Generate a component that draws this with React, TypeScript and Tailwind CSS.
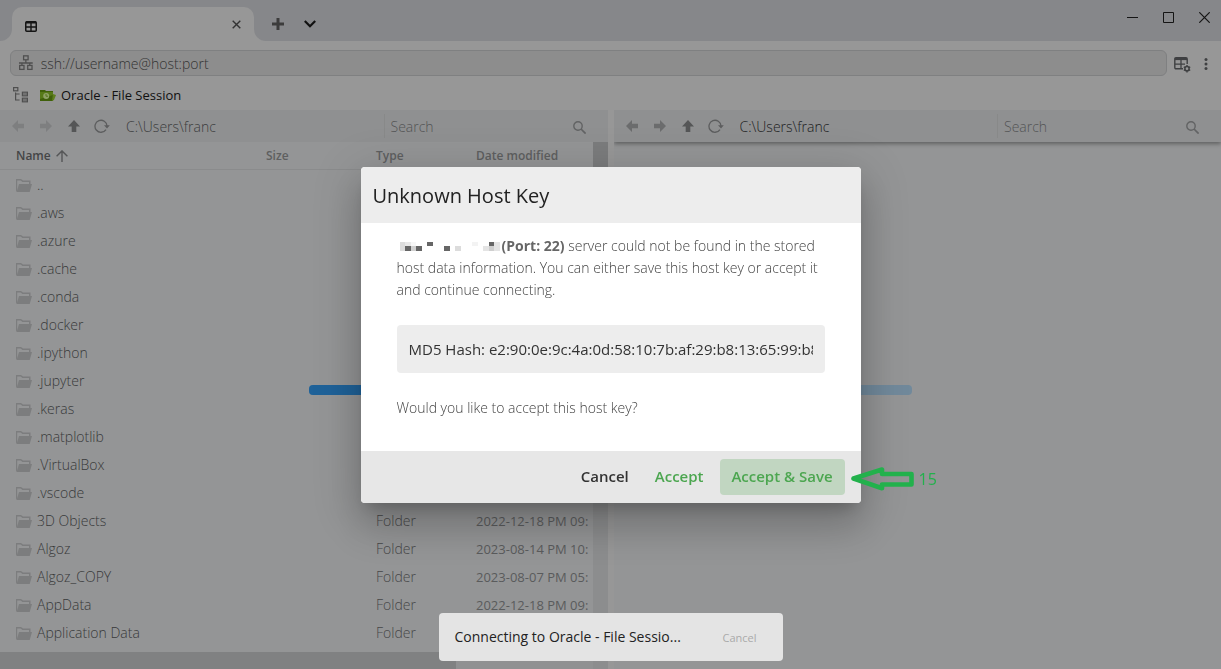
import React from "react";

const FOLDERS: [string, string, string][] = [
  ["..", "", ""],
  [".aws", "", ""],
  [".azure", "", ""],
  [".cache", "", ""],
  [".conda", "", ""],
  [".docker", "", ""],
  [".ipython", "", ""],
  [".jupyter", "", ""],
  [".keras", "", ""],
  [".matplotlib", "", ""],
  [".VirtualBox", "", ""],
  [".vscode", "", ""],
  ["3D Objects", "Folder", "2022-12-18 PM 09:"],
  ["Algoz", "Folder", "2023-08-14 PM 10:"],
  ["Algoz_COPY", "Folder", "2023-08-07 PM 05:"],
  ["AppData", "Folder", "2022-12-18 PM 09:"],
  ["Application Data", "Folder", ""],
];

function TabIcon() {
  return (
    <svg width="12" height="11" viewBox="0 0 12 11" fill="none" stroke="#151515">
      <rect x="0.75" y="0.75" width="10.5" height="9.5" rx="1" strokeWidth="1.5" />
      <path d="M1 1.4h10" strokeWidth="2.2" />
      <path d="M6 2v8M1 6h10" strokeWidth="1.4" />
    </svg>
  );
}

function NetworkIcon() {
  return (
    <svg width="16" height="16" viewBox="0 0 16 16" fill="none" stroke="#4f4f4f" strokeWidth="1.3">
      <rect x="5.7" y="0.7" width="4.6" height="4" />
      <path d="M8 5v3M1 8h14M4 8v2.5M12 8v2.5" />
      <rect x="1.7" y="10.5" width="4.4" height="4" />
      <rect x="9.9" y="10.5" width="4.4" height="4" />
    </svg>
  );
}

function TreeIcon() {
  return (
    <svg width="16" height="16" viewBox="0 0 16 16" fill="none" stroke="#4f4f4f" strokeWidth="1.2">
      <rect x="1.6" y="0.6" width="4.2" height="3.2" />
      <path d="M3.600 5.500v7.500h4M3.600 7h4" />
      <rect x="10.4" y="5.200" width="5" height="3.600" />
      <rect x="10.4" y="11.200" width="5" height="3.600" />
      <path d="M11 7h4M11 13h4" strokeWidth="1" />
    </svg>
  );
}

function SessionIcon() {
  return (
    <svg width="16" height="12" viewBox="0 0 16 12">
      <path d="M0 0h5l1 1h7v10H0z" fill="#40600b" />
      <path d="M0 2h13v3L0 9z" fill="#577a18" />
      <circle cx="6.2" cy="6" r="3" fill="#8fa266" />
      <path d="M6 4v2.2h2" stroke="#55751b" fill="none" />
      <path d="M13 4l3 1-2 5-2 1z" fill="#5f7f20" />
    </svg>
  );
}

function TableGearIcon() {
  return (
    <svg width="17" height="16" viewBox="0 0 17 16" fill="none" stroke="#3f4042">
      <path d="M9 11.7H2Q.8 11.7.8 10.5V2Q.8.8 2 .8H12Q13.2.8 13.2 2V7" strokeWidth="1.4" />
      <path d="M1 2h12" strokeWidth="2.2" />
      <path d="M7 2v10M1 7.2h10" strokeWidth="1.3" />
      <circle cx="13" cy="11.7" r="2.1" strokeWidth="1.5" />
      <path d="M13 8v1.6M13 13.8v1.6M9.8 9.9l1.4.8M14.8 12.7l1.4.8M9.8 13.5l1.4-.8M14.8 10.7l1.4-.8" strokeWidth="1.4" />
    </svg>
  );
}

function ArrowIcon({ kind }: { kind: "left" | "right" | "up" }) {
  const paths = {
    left: "M0 6L6 0V3.7H12V8.3H6V12z",
    right: "M12 6L6 0V3.7H0V8.3H6V12z",
    up: "M6 0L12 6.5H8.3V12H3.7V6.5H0z",
  };
  return (
    <svg width="12" height="12" viewBox="0 0 12 12" fill="currentColor">
      <path d={paths[kind]} />
    </svg>
  );
}

function RefreshIcon() {
  return (
    <svg width="16" height="14" viewBox="0 0 16 14" fill="none" stroke="currentColor" strokeWidth="1.3">
      <path d="M12 10.6A6 6 0 1 1 13 7" />
      <path d="M10 6.3h5.8L13 9.4z" fill="currentColor" stroke="none" />
    </svg>
  );
}

function SearchIcon() {
  return (
    <svg width="13" height="13" viewBox="0 0 13 13" fill="none" stroke="#626364" strokeWidth="1.4">
      <circle cx="5" cy="5" r="4.2" />
      <path d="M8 8l4.6 4.6" strokeWidth="1.7" />
    </svg>
  );
}

function FolderIcon() {
  return (
    <svg width="16" height="13" viewBox="0 0 16 13" className="shrink-0">
      <path d="M0 13V0h5l2 1.500h7.500V5H13V3H6.500L4.600 1.500 1.200 1.600V11z" fill="#7c7d7e" />
      <path d="M3 5h13l-2.300 8H.6z" fill="#7c7d7e" />
    </svg>
  );
}

function PanelToolbar({ id, active }: { id: string; active?: boolean }) {
  return (
    <div
      className={
        active
          ? "flex h-8 items-center bg-[#8f9091] pl-3 shadow-[0_2px_4px_rgba(0,0,0,0.35)]"
          : "flex h-8 items-center bg-[#8f9091] pl-3"
      }
    >
      <div className={active ? "flex items-center gap-4 text-[#6b6c6d]" : "flex items-center gap-4 text-[#7e7f80]"}>
        <button aria-label="Back"><ArrowIcon kind="left" /></button>
        <button aria-label="Forward"><ArrowIcon kind="right" /></button>
        <button aria-label="Up" className="text-[#555657]"><ArrowIcon kind="up" /></button>
        <button aria-label="Refresh" className="-ml-0.5 text-[#5c5d5e]"><RefreshIcon /></button>
      </div>
      <input
        aria-label="Path"
        defaultValue="C:\Users\franc"
        className={
          active
            ? "ml-4 w-0 flex-1 bg-transparent pt-0.5 text-sm font-light text-[#1c1d1e] outline-none"
            : "ml-4 w-0 flex-1 bg-transparent pt-0.5 text-sm font-light text-[#3c3d3e] outline-none"
        }
      />
      <div className="flex h-6 w-[224px] items-center border-l border-[#888989] pr-[22px] pl-1.5">
        <input
          id={id}
          aria-label="Search"
          placeholder="Search"
          className="w-0 flex-1 bg-transparent pt-0.5 text-sm font-light outline-none placeholder:text-[#535455]"
        />
        <button aria-label="Run search" className="pt-0.5"><SearchIcon /></button>
      </div>
    </div>
  );
}

function FilePanel() {
  return (
    <section className="flex min-w-0 flex-1 flex-col bg-[#949596]">
      <PanelToolbar id="search-local" />
      <div className="flex min-h-0 flex-1">
        <div className="flex min-w-0 flex-1 flex-col">
          <div className="min-h-0 flex-1 overflow-hidden">
            <table className="w-full table-fixed border-separate border-spacing-0 text-left whitespace-nowrap">
              <colgroup>
                <col className="w-[250px]" />
                <col className="w-[110px]" />
                <col className="w-[100px]" />
                <col />
              </colgroup>
              <thead className="text-xs text-[#5e5f60]">
                <tr className="h-7">
                  <th className="border-b border-[#8a8b8c] pl-4 font-semibold text-[#444546]">
                    <span className="flex items-center gap-[5px]">
                      Name
                      <svg width="12" height="12" viewBox="0 0 12 12" fill="none" stroke="#555657" strokeWidth="1.4">
                        <path d="M6 12V1M.6 6.2L6 .9l5.4 5.3" />
                      </svg>
                    </span>
                  </th>
                  <th className="border-b border-[#8a8b8c] pl-4 font-semibold">Size</th>
                  <th className="border-b border-[#8a8b8c] pl-4 font-semibold">Type</th>
                  <th className="border-b border-[#8a8b8c] pl-4 font-semibold">Date modified</th>
                </tr>
              </thead>
              <tbody className="text-sm font-light text-[#464748]">
                {FOLDERS.map(([name, type, date]) => (
                  <tr key={name} className="h-7">
                    <td className="pt-0.5 pl-4 text-[#38393a]">
                      <span className="flex items-center gap-[5px]">
                        <FolderIcon />
                        {name}
                      </span>
                    </td>
                    <td />
                    <td className="pt-0.5 pl-4">{type}</td>
                    <td className="pt-0.5 pl-4 text-[13px] font-normal text-[#5a5b5c]">{date}</td>
                  </tr>
                ))}
              </tbody>
            </table>
          </div>
          <div className="h-[17px] bg-[#909192]">
            <div className="h-full w-[77%] bg-[#808182]" />
          </div>
        </div>
        <div className="w-[15px] bg-[#8c8d8e]">
          <div className="h-1/2 bg-[#7b7c7d]" />
        </div>
      </div>
    </section>
  );
}

function RedactedHost() {
  const cells: [number, number, number, number, string][] = [
    [0, 0, 5, 9, "#dcdcdc"],
    [5, 0, 6, 4, "#e8e8e8"],
    [11, 0, 5, 4, "#f7f7f7"],
    [5, 4, 6, 5, "#666666"],
    [11, 4, 5, 5, "#cfcfcf"],
    [16, 4, 6, 5, "#666666"],
    [27, 0, 6, 4, "#666666"],
    [44, 4, 6, 5, "#666666"],
    [55, 4, 6, 5, "#dcdcdc"],
    [72, 0, 6, 4, "#f3f3f3"],
    [83, 4, 6, 5, "#e4e4e4"],
    [89, 0, 5, 4, "#666666"],
    [89, 4, 5, 5, "#cfcfcf"],
    [94, 0, 6, 9, "#e4e4e4"],
  ];
  return (
    <svg width="100" height="9" viewBox="0 0 100 9" shapeRendering="crispEdges" className="mr-0.5 ml-[3px] inline-block align-baseline">
      {cells.map(([x, y, w, h, c], i) => (
        <rect key={i} x={x} y={y} width={w} height={h} fill={c} />
      ))}
    </svg>
  );
}

function HostKeyDialog() {
  return (
    <div
      role="dialog"
      aria-labelledby="dialog-title"
      className="relative w-[500px] rounded bg-white shadow-[0_11px_15px_-7px_rgba(0,0,0,0.2),0_24px_38px_3px_rgba(0,0,0,0.14),0_9px_46px_8px_rgba(0,0,0,0.12)]"
    >
      <h1 id="dialog-title" className="flex h-14 items-center rounded-t bg-[#ededed] px-3 pt-0.5 text-xl font-medium text-[#222222]">
        Unknown Host Key
      </h1>
      <div className="px-9 pt-3 text-sm leading-[22px] font-light text-[#444444]">
        <p className="whitespace-nowrap">
          <RedactedHost />
          <b className="font-bold text-[#666666]">(Port: 22)</b> server could not be found in the stored
          <br />
          host data information. You can either save this host key or accept it
          <br />
          and continue connecting.
        </p>
        <input
          aria-label="Host key hash"
          readOnly
          value="MD5 Hash: e2:90:0e:9c:4a:0d:58:10:7b:af:29:b8:13:65:99:b8"
          className="mt-6 block h-12 w-full rounded bg-[#ededed] px-3 text-[15px] font-normal text-[#333333] outline-none"
        />
        <p className="pt-6 pb-8">Would you like to accept this host key?</p>
      </div>
      <div className="flex h-[52px] items-center justify-end gap-2 rounded-b bg-[#e7e7e7] px-4 text-[15px] font-semibold">
        <button className="h-9 px-3 text-[#333333]">Cancel</button>
        <button className="h-9 pr-2 pl-1.5 text-[#4ca650]">Accept</button>
        <button className="h-9 w-[125px] rounded bg-[#c1d6c1] text-[#4ca650]">Accept &amp; Save</button>
      </div>
      <div className="absolute bottom-3 left-[489px] flex items-center gap-1 text-base leading-6 text-[#22b14c]">
        <svg width="65" height="24" viewBox="0 0 65 24" fill="none" stroke="#22b14c" strokeWidth="4.6" strokeLinejoin="round">
          <path d="M3.500 11.500L32 2.500V7H61.500V17.500H32V21.200z" />
        </svg>
        15
      </div>
    </div>
  );
}

export default function App() {
  return (
    <div className="relative flex h-screen flex-col overflow-hidden bg-[#979797] font-['Open_Sans','Noto_Sans',sans-serif]">
      <header className="flex h-[41px] items-end justify-between bg-[#86878a]">
        <div className="flex items-end">
          <div className="h-3 w-3 bg-[#979797]"><div className="h-full rounded-br-xl bg-[#86878a]" /></div>
          <div className="flex h-[34px] w-[242px] items-center justify-between rounded-t-[10px] bg-[#979797] px-[13px] pt-1">
            <TabIcon />
            <button aria-label="Close tab" className="pb-1">
              <svg width="9" height="9" viewBox="0 0 9 9" stroke="#333333" strokeWidth="1.4"><path d="M.7.7l7.600 7.600M8.300.7L.7 8.300" /></svg>
            </button>
          </div>
          <div className="h-3 w-3 bg-[#979797]"><div className="h-full rounded-bl-xl bg-[#86878a]" /></div>
          <div className="flex h-[34px] items-center gap-5 pl-1.5">
            <button aria-label="New tab">
              <svg width="12" height="12" viewBox="0 0 12 12" stroke="#3c3c3c" strokeWidth="3"><path d="M6 0v12M0 6h12" /></svg>
            </button>
            <button aria-label="Tab list">
              <svg width="12" height="8" viewBox="0 0 12 8" fill="none" stroke="#111111" strokeWidth="2.2"><path d="M.8 1L6 6.200 11.200 1" /></svg>
            </button>
          </div>
        </div>
        <div className="flex items-center gap-[25px] self-start pt-3 pr-[11px]">
          <button aria-label="Minimize"><svg width="11" height="11" stroke="#151515"><path d="M0 5.500h11" /></svg></button>
          <button aria-label="Maximize"><svg width="11" height="11" fill="none" stroke="#151515"><path d="M.5.5h10v10H.5z" /></svg></button>
          <button aria-label="Close"><svg width="11" height="11" stroke="#151515" strokeWidth="1.2"><path d="M.3.3l10.400 10.400M10.700.3L.3 10.700" /></svg></button>
        </div>
      </header>

      <div className="flex items-center pt-2 pr-3 pl-2.5">
        <div className="mt-px flex h-[26px] flex-1 items-center gap-[7px] rounded-md border border-[#7f8081] bg-[#8d8d8d] px-[7px]">
          <NetworkIcon />
          <input aria-label="Address" placeholder="ssh://username@host:port" className="w-full bg-transparent pt-px text-sm font-light outline-none placeholder:text-[#333333]" />
        </div>
        <button aria-label="Layout settings" className="ml-[7px] pt-1"><TableGearIcon /></button>
        <button aria-label="Menu" className="ml-3 pt-0.5">
          <svg width="6" height="14" viewBox="0 0 6 14" fill="#3f4042"><circle cx="3" cy="2.500" r="1.500" /><circle cx="3" cy="7" r="1.500" /><circle cx="3" cy="11.500" r="1.500" /></svg>
        </button>
      </div>
      <div className="flex h-[34px] items-center pt-1 pl-3">
        <button aria-label="Session tree"><TreeIcon /></button>
        <a href="#session" className="ml-3 flex items-center gap-[5px] pt-px text-[13px] text-[#111111]">
          <SessionIcon />
          Oracle - File Session
        </a>
      </div>

      <main className="flex min-h-0 flex-1 gap-1.5">
        <FilePanel />
        <section className="flex min-w-0 flex-1 flex-col overflow-hidden bg-[#949596]">
          <PanelToolbar id="search-remote" active />
        </section>
      </main>

      <div className="absolute inset-0 flex items-center justify-center pt-[111px]">
        <div className="flex h-2.5 w-[603px] overflow-hidden rounded bg-[#71899b]">
          <div className="w-1/2 bg-[#1f6299]" />
        </div>
      </div>
      <div className="fixed inset-0 flex items-center justify-center">
        <HostKeyDialog />
      </div>
      <div role="status" className="fixed inset-x-0 bottom-2 mx-auto flex h-12 w-[344px] items-center justify-between rounded bg-[#e4e4e4] pr-[26px] pl-4 text-sm text-[#222222]">
        Connecting to Oracle - File Sessio...
        <button className="pt-px text-[11px] text-[#aaaaaa]">Cancel</button>
      </div>
    </div>
  );
}
